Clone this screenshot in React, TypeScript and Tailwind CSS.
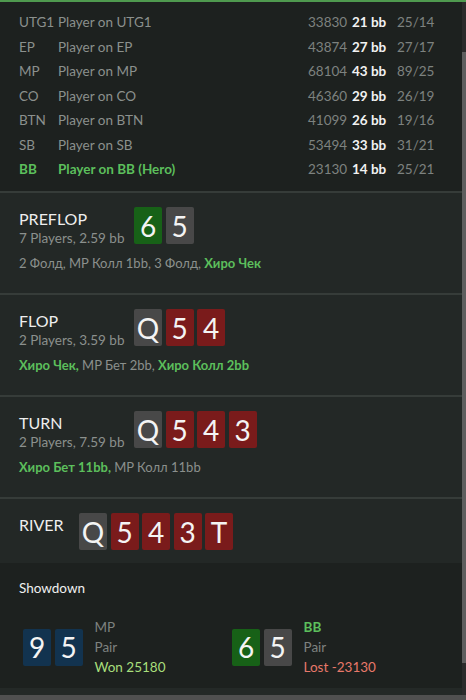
import React from "react";

type Color = "green" | "gray" | "red" | "navy";

function Card({ v, c }: { v: string; c: Color }) {
  const cls =
    c === "green"
      ? "bg-[#176117]"
      : c === "gray"
      ? "bg-[#484848]"
      : c === "red"
      ? "bg-[#7a1b1b]"
      : "bg-[#12334f]";
  return (
    <div
      className={`${cls} w-[28px] h-[37px] rounded-[2px] flex items-center justify-center text-[28px] leading-none text-[#f4f4f4]`}
    >
      {v}
    </div>
  );
}

const players = [
  ["UTG1", "Player on UTG1", "33830", "21 bb", "25/14"],
  ["EP", "Player on EP", "43874", "27 bb", "27/17"],
  ["MP", "Player on MP", "68104", "43 bb", "89/25"],
  ["CO", "Player on CO", "46360", "29 bb", "26/19"],
  ["BTN", "Player on BTN", "41099", "26 bb", "19/16"],
  ["SB", "Player on SB", "53494", "33 bb", "31/21"],
  ["BB", "Player on BB (Hero)", "23130", "14 bb", "25/21"],
];

function Street({
  title,
  sub,
  cards,
  actions,
}: {
  title: string;
  sub?: string;
  cards: [string, Color][];
  actions?: React.ReactNode;
}) {
  return (
    <div className="h-[102px] bg-[#232826] border-t-2 border-[#363c39] px-[19px] pt-[14px]">
      <div className="flex items-start">
        <div className="w-[115px] pt-[2px]">
          <div className="text-[16px] leading-[20px] text-[#eeeeee]">{title}</div>
          {sub && <div className="text-[13.5px] leading-[18px] text-[#8b908d]">{sub}</div>}
        </div>
        <div className="flex gap-[3.5px]">
          {cards.map(([v, c], i) => (
            <Card key={i} v={v} c={c} />
          ))}
        </div>
      </div>
      {actions && <div className="mt-[7px] text-[13px] leading-[18px] text-[#8b908d]">{actions}</div>}
    </div>
  );
}

const G = ({ children }: { children: React.ReactNode }) => (
  <span className="font-bold text-[#5cbf5c]">{children}</span>
);

export default function App() {
  return (
    <div
      className="w-[466px] h-[700px] overflow-hidden bg-[#1d211f] flex flex-col"
      style={{ fontFamily: 'Lato, "Noto Sans", sans-serif' }}
    >
      <div className="h-[2px] bg-[#4f9a4f]" />
      <div className="flex flex-1 min-h-0">
        <div className="flex-1 flex flex-col min-w-0">
          <div className="h-[189px] pt-[8px] px-[19px] text-[13.5px]">
            {players.map((p, i) => {
              const hero = i === players.length - 1;
              return (
                <div key={i} className="flex h-[24.5px] items-center">
                  <div className={`w-[39px] ${hero ? "text-[#5cbf5c] font-bold" : "text-[#8b908d]"}`}>{p[0]}</div>
                  <div className={`w-[250px] ${hero ? "text-[#5cbf5c] font-bold" : "text-[#8b908d]"}`}>{p[1]}</div>
                  <div className="w-[44px] text-[#7d827f]">{p[2]}</div>
                  <div className="w-[45px] font-bold text-[#f2f2f2]">{p[3]}</div>
                  <div className="text-[#7d827f]">{p[4]}</div>
                </div>
              );
            })}
          </div>
          <Street
            title="PREFLOP"
            sub="7 Players, 2.59 bb"
            cards={[
              ["6", "green"],
              ["5", "gray"],
            ]}
            actions={
              <>
                2 Фолд, MP Колл 1bb, 3 Фолд, <G>Хиро Чек</G>
              </>
            }
          />
          <Street
            title="FLOP"
            sub="2 Players, 3.59 bb"
            cards={[
              ["Q", "gray"],
              ["5", "red"],
              ["4", "red"],
            ]}
            actions={
              <>
                <G>Хиро Чек,</G> MP Бет 2bb, <G>Хиро Колл 2bb</G>
              </>
            }
          />
          <Street
            title="TURN"
            sub="2 Players, 7.59 bb"
            cards={[
              ["Q", "gray"],
              ["5", "red"],
              ["4", "red"],
              ["3", "red"],
            ]}
            actions={
              <>
                <G>Хиро Бет 11bb,</G> MP Колл 11bb
              </>
            }
          />
          <div className="h-[66px] bg-[#232826] border-t-2 border-[#363c39] px-[19px] pt-[14px]">
            <div className="flex items-start">
              <div className="w-[60px] pt-[2px] text-[16px] leading-[20px] text-[#eeeeee]">RIVER</div>
              <div className="flex gap-[3.5px]">
                <Card v="Q" c="gray" />
                <Card v="5" c="red" />
                <Card v="4" c="red" />
                <Card v="3" c="red" />
                <Card v="T" c="red" />
              </div>
            </div>
          </div>
          <div className="h-[125px] bg-[#1d211f] pl-[19px] pt-[16px]">
            <div className="text-[13.5px] leading-[18px] text-[#f0f0f0]">Showdown</div>
            <div className="flex mt-[20px] pl-[4px]">
              <div className="w-[209px] flex items-center">
                <div className="flex gap-[3.5px]">
                  <Card v="9" c="navy" />
                  <Card v="5" c="navy" />
                </div>
                <div className="ml-[12px] text-[13.5px] leading-[20px]">
                  <div className="text-[#7d827f]">MP</div>
                  <div className="text-[#7d827f]">Pair</div>
                  <div className="text-[#a8df7c]">Won 25180</div>
                </div>
              </div>
              <div className="flex items-center">
                <div className="flex gap-[3.5px]">
                  <Card v="6" c="green" />
                  <Card v="5" c="gray" />
                </div>
                <div className="ml-[12px] text-[13.5px] leading-[20px]">
                  <div className="text-[#5cbf5c] font-bold">BB</div>
                  <div className="text-[#7d827f]">Pair</div>
                  <div className="text-[#e8786a]">Lost -23130</div>
                </div>
              </div>
            </div>
          </div>
          <div className="h-[7px] bg-[#242927]" />
        </div>
        <div className="w-[4px] bg-[#2b2b2b] flex flex-col">
          <div className="h-[50px]" />
          <div className="h-[611px] bg-[#5e5e5e]" />
        </div>
      </div>
      <div className="h-[5px] bg-[#505050]" />
    </div>
  );
}
